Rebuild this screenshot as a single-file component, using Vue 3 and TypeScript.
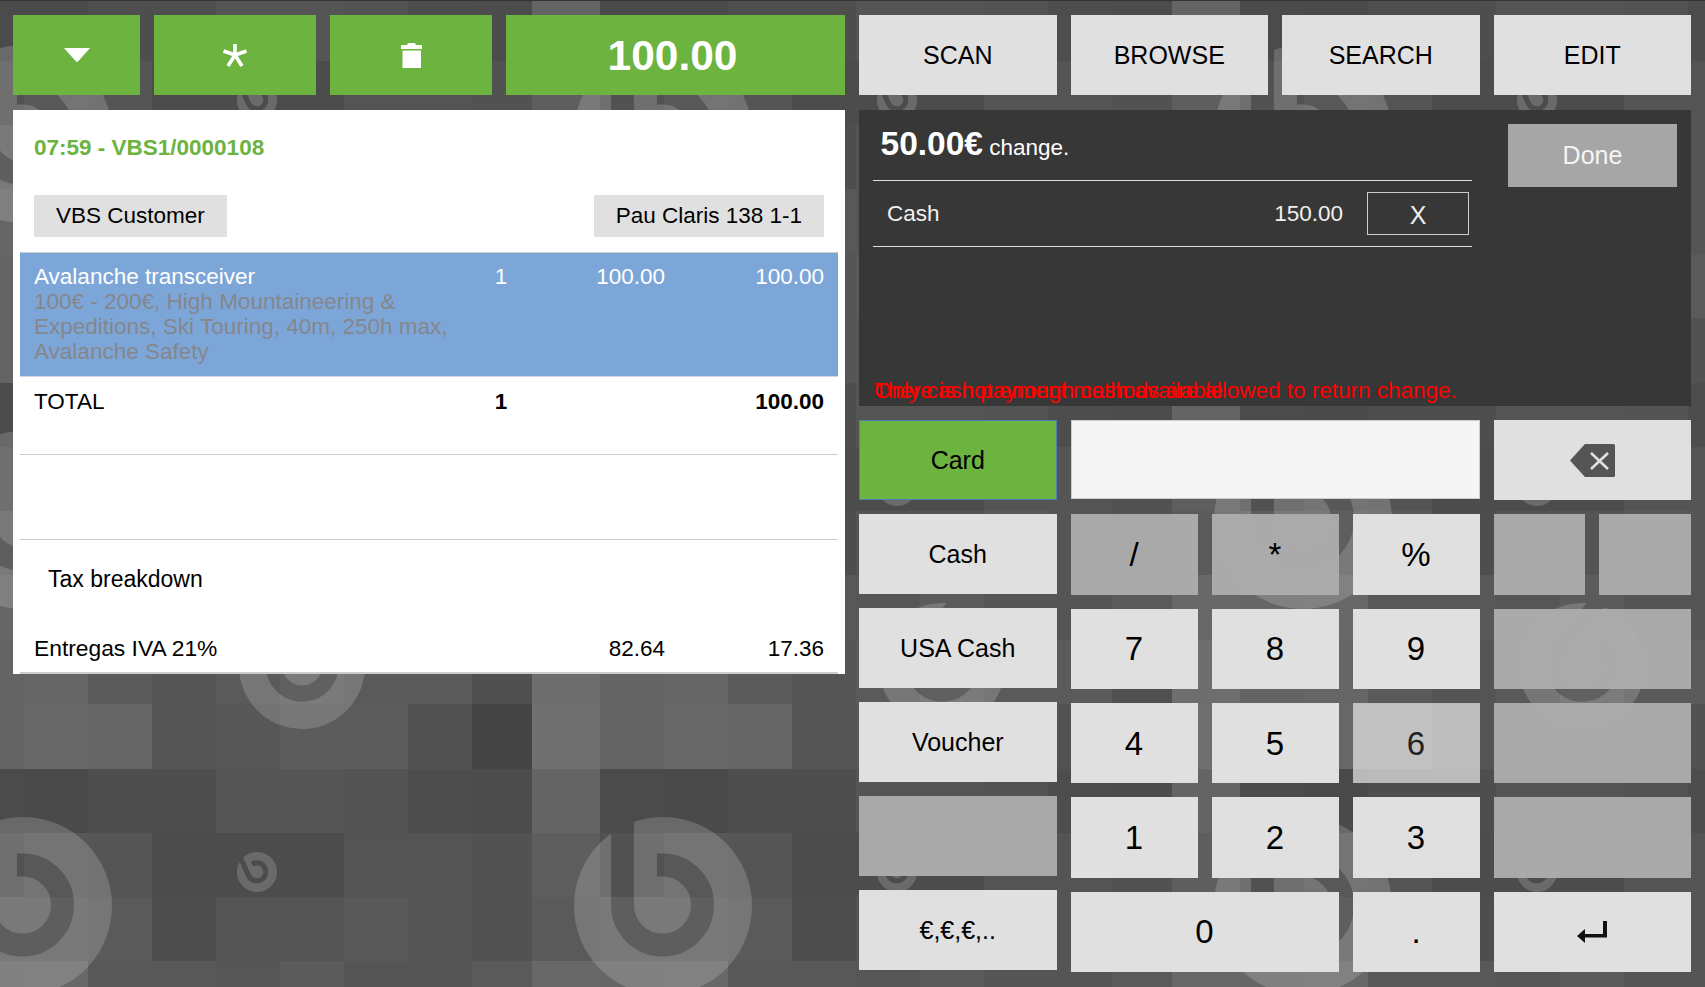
<script setup lang="ts">
import { computed } from 'vue'

// mosaic of the wallpaper: 10 x 6 cells, repeated every 640 x 386
const colEdges = [0, 64, 128, 192, 256, 320, 384, 448, 508, 576, 640]
const rowEdges = [0, 64, 129, 193, 257, 321, 386]
const greys = [
  ['#666', '#5a5a5a', '#555', '#5a5a5a', '#606060', '#5a5a5a', '#5a5a5a', '#505050', '#6e6e6e', '#646464'],
  ['#676767', '#666', '#555', '#575757', '#5c5c5c', '#5c5c5c', '#525252', '#444', '#707070', '#646464'],
  ['#4a4a4a', '#4e4e4e', '#4e4e4e', '#555', '#555', '#535353', '#4d4d4d', '#4c4c4c', '#646464', '#4b4b4b'],
  ['#585858', '#555', '#4c4c4c', '#4c4c4c', '#4c4c4c', '#545454', '#545454', '#525252', '#5e5e5e', '#525252'],
  ['#5e5e5e', '#5a5a5a', '#4e4e4e', '#545454', '#545454', '#595959', '#555', '#525252', '#5a5a5a', '#5e5e5e'],
  ['#686868', '#585858', '#585858', '#565656', '#5b5b5b', '#555', '#555', '#5a5a5a', '#686868', '#666'],
]

const cells = computed(() =>
  greys.flatMap((row, r) =>
    row.map((fill, c) => ({
      key: `${r}-${c}`,
      x: colEdges[c],
      y: rowEdges[r],
      w: colEdges[c + 1] - colEdges[c],
      h: rowEdges[r + 1] - rowEdges[r],
      fill,
    })),
  ),
)

const logos = [
  'translate(639 266)',
  'translate(-1 266)',
  'translate(233 232) scale(0.225) rotate(-25)',
  'translate(278 26) scale(0.708) rotate(40)',
  'translate(278 412) scale(0.708) rotate(40)',
]

const actions = ['SCAN', 'BROWSE', 'SEARCH', 'EDIT']
const methods = ['Cash', 'USA Cash', 'Voucher', '', '€,€,€,..']
</script>

<template>
  <div class="screen">
    <svg class="wallpaper" width="1705" height="987" aria-hidden="true">
      <defs>
        <mask id="logo-cut" maskUnits="userSpaceOnUse" x="-120" y="-120" width="240" height="240">
          <rect x="-120" y="-120" width="240" height="240" fill="#fff" />
          <path d="M-6 -41H-0.5A40 40 0 1 1 -40.5 -1V-115" fill="none" stroke="#000" stroke-width="23" />
        </mask>
        <g id="logo">
          <circle r="89" fill="#fff" fill-opacity="0.17" mask="url(#logo-cut)" />
        </g>
        <pattern id="tile" patternUnits="userSpaceOnUse" x="24" y="254" width="640" height="386">
          <rect
            v-for="cell in cells"
            :key="cell.key"
            :x="cell.x"
            :y="cell.y"
            :width="cell.w"
            :height="cell.h"
            :fill="cell.fill"
          />
          <use v-for="pos in logos" :key="pos" href="#logo" :transform="pos" />
        </pattern>
      </defs>
      <rect width="1705" height="987" fill="url(#tile)" />
    </svg>

    <section class="column">
      <div class="topbar topbar-order">
        <button class="tile green">
          <svg width="26" height="14" viewBox="0 0 26 14"><path d="M0 0H26L14 13.5Q13 14 12 13.5Z" fill="#fff" /></svg>
        </button>
        <button class="tile green">
          <svg width="26" height="25" viewBox="0 0 26 25">
            <g stroke="#fff" stroke-width="3.6" fill="none">
              <path d="M13 11V1" />
              <path d="M13 12L1.5 8" />
              <path d="M13 12L24.5 8" />
              <path d="M13 12L6 23" />
              <path d="M13 12L20 23" />
            </g>
          </svg>
        </button>
        <button class="tile green">
          <svg width="21" height="25" viewBox="0 0 21 25">
            <path d="M6 2Q6 0 8 0H13Q15 0 15 2H21V6H0V2ZM1.5 7.5H20V25H1.5Z" fill="#fff" />
          </svg>
        </button>
        <button class="tile green amount">100.00</button>
      </div>

      <div class="ticket">
        <div class="ticket-title">07:59 - VBS1/0000108</div>
        <div class="ticket-tags">
          <span class="tag">VBS Customer</span>
          <span class="tag">Pau Claris 138 1-1</span>
        </div>
        <div class="lines">
          <div class="cols line-item">
            <div>
              Avalanche transceiver
              <div class="line-desc">100€ - 200€, High Mountaineering &amp; Expeditions, Ski Touring, 40m, 250h max, Avalanche Safety</div>
            </div>
            <div class="qty">1</div>
            <div class="num">100.00</div>
            <div class="num">100.00</div>
          </div>
          <div class="cols line-total">
            <div>TOTAL</div>
            <div class="qty strong">1</div>
            <div class="num"></div>
            <div class="num strong">100.00</div>
          </div>
          <div class="line-blank"></div>
          <div class="tax-title">Tax breakdown</div>
          <div class="cols line-tax">
            <div class="tax-name">Entregas IVA 21%</div>
            <div class="qty"></div>
            <div class="num">82.64</div>
            <div class="num">17.36</div>
          </div>
        </div>
      </div>
    </section>

    <section class="column">
      <div class="topbar topbar-actions">
        <button v-for="action in actions" :key="action" class="tile key">{{ action }}</button>
      </div>

      <div class="payment">
        <div class="payment-main">
          <div class="change"><b>50.00€</b> change.</div>
          <div class="paid">
            <span class="paid-name">Cash</span>
            <span class="paid-amount">150.00</span>
            <button class="paid-remove">X</button>
          </div>
        </div>
        <button class="tile done">Done</button>
        <div class="warning">There is not enough cash available</div>
        <div class="warning">Only cash payment methods are allowed to return change.</div>
      </div>

      <div class="pad">
        <div class="methods">
          <button class="tile key card">Card</button>
          <button
            v-for="(method, i) in methods"
            :key="i"
            class="tile"
            :class="method ? 'key' : 'off'"
          >{{ method }}</button>
        </div>

        <div class="numpad">
          <div class="entry"></div>
          <button class="tile key wide">
            <svg width="45" height="33" viewBox="0 0 45 33">
              <path d="M15 0H43.5Q45 0 45 1.5V31.5Q45 33 43.5 33H15L0 16.5Z" fill="#555" />
              <path d="M21 9L38 25M38 9L21 25" stroke="#e0e0e0" stroke-width="2.6" fill="none" />
            </svg>
          </button>

          <button class="tile off digit">/</button>
          <button class="tile off digit">*</button>
          <button class="tile key digit">%</button>
          <button class="tile off"></button>
          <button class="tile off"></button>

          <button class="tile key digit">7</button>
          <button class="tile key digit">8</button>
          <button class="tile key digit">9</button>
          <button class="tile off wide"></button>

          <button class="tile key digit">4</button>
          <button class="tile key digit">5</button>
          <button class="tile key digit pressed">6</button>
          <button class="tile off wide"></button>

          <button class="tile key digit">1</button>
          <button class="tile key digit">2</button>
          <button class="tile key digit">3</button>
          <button class="tile off wide"></button>

          <button class="tile key digit zero">0</button>
          <button class="tile key digit">.</button>
          <button class="tile key wide">
            <svg width="30" height="22" viewBox="0 0 30 22">
              <path d="M0 15L8 8V13H26V0H30V16.5H8V22Z" fill="#111" />
            </svg>
          </button>
        </div>
      </div>
    </section>
  </div>
</template>

<style scoped>
.screen {
  position: relative;
  width: 1705px;
  height: 987px;
  overflow: hidden;
  box-sizing: border-box;
  display: flex;
  gap: 14px;
  padding: 14px 13px 0;
  border-top: 1px solid #333;
  font-family: "Liberation Sans", Arial, sans-serif;
  font-size: 22.5px;
  line-height: 25px;
  color: #000;
}

.wallpaper {
  position: absolute;
  left: 0;
  top: -1px;
}

.column {
  position: relative;
  width: 832px;
  flex: none;
}

.topbar {
  display: grid;
  gap: 14px;
  height: 80px;
  margin-bottom: 15px;
}

.topbar-order {
  grid-template-columns: 127px 162px 162px 1fr;
}

.topbar-actions {
  grid-template-columns: repeat(4, 1fr);
}

.tile {
  display: flex;
  align-items: center;
  justify-content: center;
  border: 0;
  padding: 0;
  margin: 0;
  font: inherit;
  font-size: 25px;
  color: #000;
}

.green {
  background: #6cb33f;
  color: #fff;
}

.amount {
  padding-right: 6px;
  font-size: 42.5px;
  font-weight: bold;
}

.key {
  background: #e0e0e0;
}

.off {
  background: rgba(172, 172, 172, 0.97);
}

.card {
  box-sizing: border-box;
  background: #6cb33f;
  border: 1px solid #4f7fb5;
}

/* order ticket */
.ticket {
  height: 564px;
  background: #fff;
  padding: 0 7px;
  box-sizing: border-box;
}

.ticket-title {
  height: 74px;
  padding-left: 14px;
  display: flex;
  align-items: center;
  color: #6cb33f;
  font-weight: bold;
}

.ticket-tags {
  display: flex;
  justify-content: space-between;
  padding: 11px 14px 15px;
}

.tag {
  height: 42px;
  line-height: 42px;
  padding: 0 22px;
  background: #e0e0e0;
}

.cols {
  display: grid;
  grid-template-columns: 436px 62px 133px 159px;
  padding: 0 14px;
}

.qty {
  text-align: center;
}

.num {
  text-align: right;
}

.strong {
  font-weight: bold;
}

.line-item {
  background: #7da6d8;
  border-top: 1px solid #ccc;
  border-bottom: 1px solid #ccd6e4;
  padding-top: 11px;
  padding-bottom: 12px;
  color: #fff;
}

.line-desc {
  color: #85868c;
}

.line-total {
  height: 78px;
  box-sizing: border-box;
  padding-top: 12px;
  border-bottom: 1px solid #ccc;
}

.line-blank {
  height: 85px;
  box-sizing: border-box;
  border-bottom: 1px solid #ccc;
}

.tax-title {
  height: 83px;
  box-sizing: border-box;
  padding: 27px 0 0 28px;
  font-size: 23px;
}

.line-tax {
  height: 51px;
  box-sizing: border-box;
  padding-top: 13px;
  border-bottom: 2px solid #ccc;
}

.tax-name {
  font-size: 22.8px;
}

/* payment summary */
.payment {
  position: relative;
  height: 296px;
  margin-bottom: 14px;
  display: flex;
  align-items: flex-start;
  background: #373737;
  color: #f0f0f0;
}

.payment-main {
  width: 599px;
  margin-left: 14px;
}

.change {
  height: 71px;
  box-sizing: border-box;
  padding: 14px 0 0 7.5px;
  border-bottom: 1px solid #ddd;
  font-size: 22.5px;
  line-height: 40px;
  color: #fff;
}

.change b {
  font-size: 33.5px;
}

.paid {
  height: 66px;
  box-sizing: border-box;
  display: flex;
  align-items: center;
  padding: 0 3px 0 14px;
  border-bottom: 1px solid #ddd;
}

.paid-name {
  flex: 1;
}

.paid-amount {
  margin-right: 24px;
}

.paid-remove {
  width: 102px;
  height: 43px;
  padding: 3px 0 0;
  background: transparent;
  border: 1px solid #ccc;
  font: inherit;
  font-size: 25px;
  color: #eee;
}

.done {
  width: 169px;
  height: 63px;
  margin: 14px 0 0 36px;
  background: #a6a6a6;
  color: #f4f4f4;
}

.warning {
  position: absolute;
  left: 15px;
  bottom: 3px;
  color: #f00;
}

/* keypad */
.pad {
  display: flex;
  gap: 14px;
}

.methods {
  width: 197.5px;
  flex: none;
  display: grid;
  grid-auto-rows: 80px;
  gap: 14px;
}

.numpad {
  flex: 1;
  height: 552px;
  display: grid;
  grid-template-columns: repeat(3, 1fr) 91.75px 91.75px;
  grid-template-rows: repeat(6, 1fr);
  gap: 14px;
}

.entry {
  grid-column: span 3;
  margin-bottom: 1px;
  box-sizing: border-box;
  background: #f5f5f5;
  border: 1px solid #ccc;
}

.wide {
  grid-column: span 2;
}

.zero {
  grid-column: span 2;
}

.digit {
  font-size: 33px;
}

.pressed {
  background: rgba(224, 224, 224, 0.75);
  color: #222;
}
</style>
